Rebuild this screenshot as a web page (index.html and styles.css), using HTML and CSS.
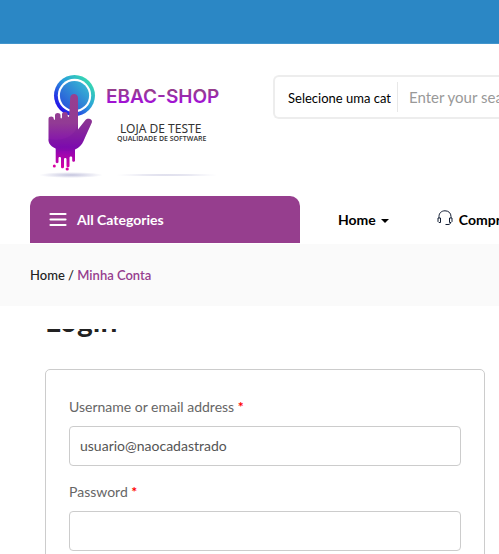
FILE: index.html
```html
<!DOCTYPE html>
<html lang="pt-BR">
<head>
<meta charset="utf-8">
<meta name="viewport" content="width=device-width, initial-scale=1">
<title>Minha Conta</title>
<link rel="stylesheet" href="styles.css">
</head>
<body>
<div class="topbar"></div>
<header class="header">
  <a class="logo" href="#">
    <svg width="200" height="120" viewBox="30 62 200 120" role="img" aria-label="EBAC-SHOP">
      <defs>
        <linearGradient id="ring" x1="0" y1="1" x2="1" y2="0">
          <stop offset="0.15" stop-color="#2210e8"/><stop offset="0.55" stop-color="#2a9edb"/><stop offset="0.9" stop-color="#38e0ac"/>
        </linearGradient>
        <linearGradient id="disc" x1="0" y1="1" x2="1" y2="0">
          <stop offset="0" stop-color="#2748dc"/><stop offset="1" stop-color="#38c3d2"/>
        </linearGradient>
        <linearGradient id="hand" gradientUnits="userSpaceOnUse" x1="0" y1="94" x2="0" y2="170">
          <stop offset="0" stop-color="#983f8f"/><stop offset="0.38" stop-color="#923b94"/><stop offset="0.7" stop-color="#8109b4"/><stop offset="1" stop-color="#e000a4"/>
        </linearGradient>
        <linearGradient id="word" x1="0" y1="0" x2="0" y2="1">
          <stop offset="0.25" stop-color="#963e8e"/><stop offset="0.8" stop-color="#a20edb"/>
        </linearGradient>
        <radialGradient id="shade">
          <stop offset="0" stop-color="#c4c4de"/><stop offset="1" stop-color="#c4c4de" stop-opacity="0"/>
        </radialGradient>
      </defs>
      <ellipse cx="71" cy="175" rx="32" ry="3" fill="url(#shade)"/>
      <ellipse cx="167" cy="175" rx="58" ry="1" fill="url(#shade)"/>
      <circle cx="74.500" cy="95.500" r="20.500" fill="url(#ring)"/>
      <circle cx="74.500" cy="95.500" r="16.700" fill="#fff"/>
      <circle cx="74.500" cy="95.500" r="14.600" fill="url(#disc)"/>
      <path fill="url(#hand)" d="M70.200 98c0-5.400 7.800-5.400 7.800 0v31.500l7.500-9.500c2-2.500 7.500-1 6.300 2.500-3 7-6 13-8.300 18.500-1.700 4-4.500 6.500-8.500 8.500v11c0 1.800-2.800 1.800-2.800 0v-3c0-1.500-2.700-1.500-2.700 0v8.500c0 1.800-3 1.800-3 0v-7c0-1.500-2.500-1.500-2.500 0v8c0 1.800-3 1.800-3 0v-9c0-1.500-2.500-1.500-2.500 0v4c0 1.500-2.800 1.500-2.800 0V148.500c-4-2-6.700-4-7.200-8V119c0-3.200 5.300-3.200 5.300 0 .5 1.500 1.200 1 1.200-.5v-3c0-3.200 5.500-3.200 5.500 0v2c.4 1.500 1.500 1 1.500-.5v-2.500c0-3.200 5.700-3.200 5.700 0v1.500c.4 1.500 1.500 1 1.500-.5z"/>
      <path fill="#6f1298" opacity=".22" d="M48.500 139c15 3 27-3 29.500-15v5.500l7.500-9.500c2-2.500 7.500-1 6.300 2.500l-8.300 18.500c-1.700 4-4.500 6.500-8.500 8.500-8 2-15 1.500-19.500-1-4-2-6.700-4-7-9.500z"/>
      <circle cx="54.300" cy="166" r="1.500" fill="#dc00a3"/><circle cx="67.200" cy="169" r="1.600" fill="#e000a4"/>
      <text class="logo-name" x="106" y="103">EBAC-SHOP</text>
      <text class="logo-line" x="120" y="133">LOJA DE TESTE</text>
      <text class="logo-small" x="117" y="141">QUALIDADE DE SOFTWARE</text>
    </svg>
  </a>
  <form class="search">
    <select class="category" aria-label="Categoria"><option>Selecione uma categoria</option></select>
    <input class="query" type="text" aria-label="Search" placeholder="Enter your search">
  </form>
</header>
<nav class="nav">
  <button class="all" type="button">
    <svg width="18" height="16" viewBox="0 0 18 16" stroke="#fff" stroke-width="2.200" stroke-linecap="round" aria-hidden="true"><path d="M1.500 2h15M1.500 7.500h15M1.500 13h15"/></svg>
    All Categories
  </button>
  <a class="home" href="#">Home <span class="caret"></span></a>
  <a class="buy" href="#">
    <svg width="16" height="16" viewBox="0 0 16 16" fill="none" stroke="#111c33" aria-hidden="true"><path d="M2 8V6.500C2 3 4.500.8 8 .8S14 3 14 6.500V8M1 8h2.500v4.500H2L1 11.500zM15 8h-2.500v4.500H14l1-1zM13.500 12.500c0 1.500-1 2-2.500 2H8.500"/></svg>
    Comprar
  </a>
</nav>
<div class="breadcrumb"><a href="#">Home</a> / <span class="here">Minha Conta</span></div>
<main class="account">
  <h2 class="title">Login</h2>
  <form class="login">
    <label for="user">Username or email address <b>*</b></label>
    <input id="user" type="text" value="usuario@naocadastrado">
    <label for="pass">Password <b>*</b></label>
    <input id="pass" type="password">
  </form>
</main>
</body>
</html>
```
FILE: styles.css
```css
* { box-sizing: border-box; }
html { overflow: hidden; }
body {
  margin: 0;
  overflow: hidden;
  background: #fff;
  color: #222;
  font: 14px/20px Lato, sans-serif;
}
a { color: inherit; text-decoration: none; }
input, select, button { font: inherit; }
.topbar { height: 44px; background: #2b87c5; border-bottom: 1px solid #4295cc; }

.header { display: flex; align-items: flex-start; padding: 18px 0 14px 30px; }
.logo { flex: none; width: 243px; }
.logo svg { display: block; }
.logo-name { font: 600 19px Inter, sans-serif; fill: url(#word); }
.logo-line { font: 12px "Noto Sans", sans-serif; fill: #333; }
.logo-small { font: 600 7px "Open Sans", sans-serif; fill: #333; }
.search {
  flex: 1;
  display: flex;
  align-items: center;
  height: 44px;
  min-width: 0;
  margin-top: 13px;
  border: 2px solid #ededed;
  border-right: 0;
  border-radius: 6px 0 0 6px;
  overflow: hidden;
}
.category {
  appearance: none;
  flex: none;
  width: 116px;
  height: 42px;
  padding: 2px 0 0 13px;
  border: 0;
  background: none;
  color: #000;
  font-size: 13px;
}
.query {
  flex: 1;
  min-width: 0;
  height: 30px;
  margin-left: 6px;
  padding: 0 0 0 11px;
  border: 0;
  border-left: 1px solid #e8e8e8;
  outline: 0;
  font-size: 15px;
}
.query::placeholder { color: #999; }

.nav {
  display: flex;
  align-items: stretch;
  height: 48px;
  padding: 0 0 1px 30px;
  color: #000;
  font-weight: 700;
  white-space: nowrap;
}
.nav a { display: flex; align-items: center; flex: none; }
.all {
  display: flex;
  align-items: center;
  flex: none;
  gap: 10px;
  width: 270px;
  padding: 0 19px;
  border: 0;
  border-radius: 10px 10px 0 0;
  background: #963e8e;
  color: #fff;
  font-weight: 700;
}
.home { margin-left: 38px; gap: 5px; }
.caret { border: 4px solid transparent; border-top-color: #000; border-bottom: 0; margin-top: 2px; }
.buy { margin-left: 48px; gap: 6px; }
.buy svg { margin-bottom: 3px; }

.breadcrumb { padding: 21px 30px; background: #fafafa; font-size: 13px; font-weight: 500; }
.here { color: #963e8e; font-weight: 600; }

.account { padding: 23px 14px 0 45px; }
.title {
  display: flex;
  align-items: flex-end;
  height: 8px;
  margin: 0 0 32px;
  overflow: hidden;
  font: 700 30px/34px Lato, sans-serif;
}
.login {
  padding: 27px 23px;
  border: 1px solid #ccc;
  border-radius: 5px;
  color: #666;
}
.login label { display: block; margin-bottom: 9px; }
.login b { color: red; }
.login input {
  display: block;
  width: 100%;
  height: 40px;
  margin-bottom: 16px;
  padding: 0 10px 1px;
  border: 1px solid #ccc;
  border-radius: 4px;
  background: #fff;
  color: #555;
}
```
